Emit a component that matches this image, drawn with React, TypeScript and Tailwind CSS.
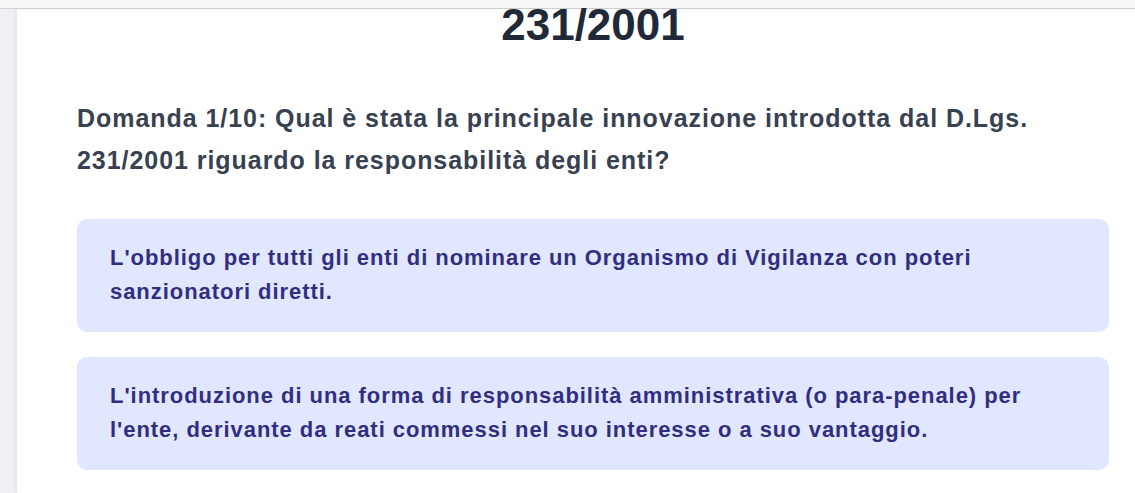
const OPTIONS = [
  "L'obbligo per tutti gli enti di nominare un Organismo di Vigilanza con poteri sanzionatori diretti.",
  "L'introduzione di una forma di responsabilità amministrativa (o para-penale) per l'ente, derivante da reati commessi nel suo interesse o a suo vantaggio.",
];

export default function App() {
  return (
    <div className="flex h-[493px] w-full flex-col overflow-hidden bg-[#eef0f4] font-['Liberation_Sans',Arial,sans-serif]">
      {/* top bar */}
      <div className="h-[9px] shrink-0 bg-[#f7f8fa] border-b border-[#d3d3d3]" />

      <div className="flex flex-1">
        {/* side gutter */}
        <div className="w-[17px] shrink-0 bg-[#eef0f4]" />

        {/* quiz card */}
        <div className="w-[1152px] shrink-0 bg-white px-[60px] shadow-[-2px_0_4px_rgba(0,0,0,0.05)]">
          <div className="w-[1032px]">
            <h1 className="-mt-[10px] text-center text-[44px] leading-[1.2] font-bold text-[#1f2937]">
              231/2001
            </h1>

            <h2 className="mt-[45px] text-[25px] leading-[42px] tracking-[0.95px] font-bold text-[#374151]">
              Domanda 1/10: Qual è stata la principale innovazione introdotta dal D.Lgs. 231/2001 riguardo la
              responsabilità degli enti?
            </h2>

            <div className="mt-[38px] flex flex-col gap-[25px]">
              {OPTIONS.map((opt) => (
                <button
                  key={opt}
                  className="w-full rounded-[10px] bg-[#e0e7ff] pl-[33px] pr-8 pt-[22px] pb-[23px] text-left text-[22px] leading-[34px] tracking-[0.95px] font-bold text-[#312e81]"
                >
                  {opt}
                </button>
              ))}
            </div>
          </div>
        </div>
      </div>
    </div>
  );
}
